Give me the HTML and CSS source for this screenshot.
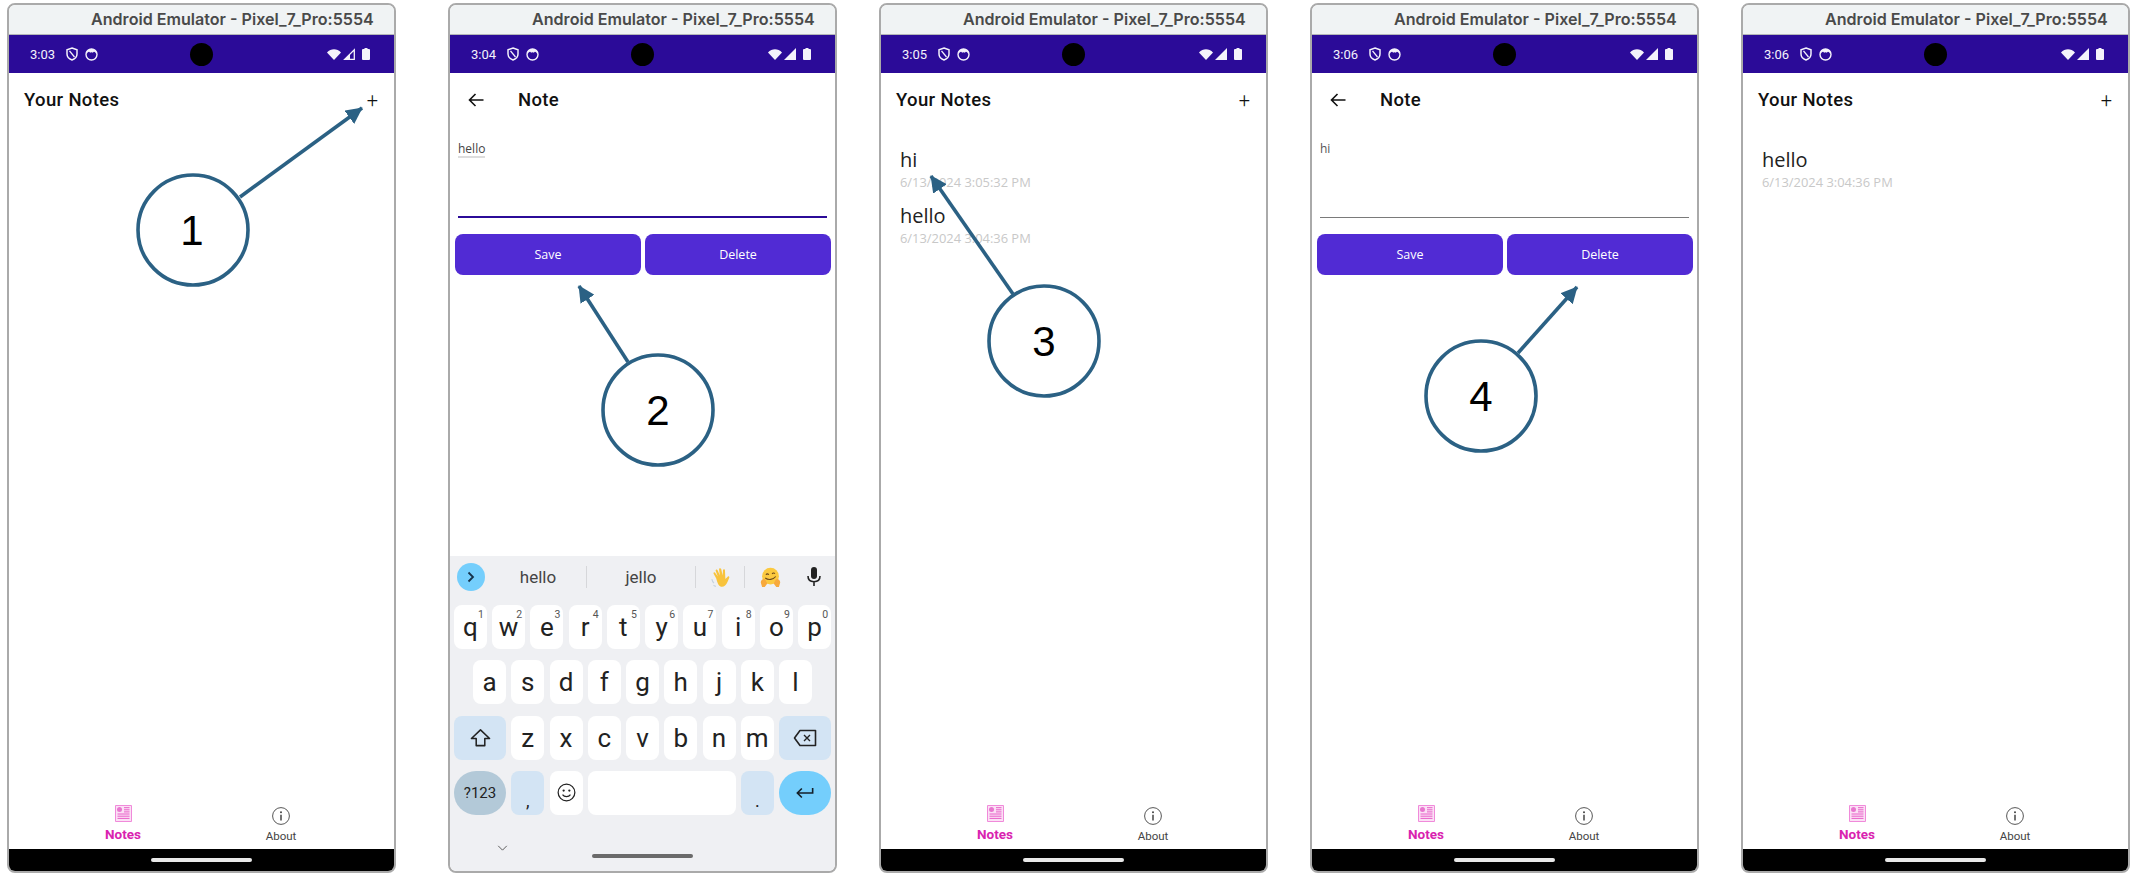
FILE: index.html
```html
<!DOCTYPE html>
<html lang="en">
<head>
    <meta charset="UTF-8">
    <meta name="viewport" content="width=device-width, initial-scale=1.0">
    <title>Your Notes walkthrough</title>
    <link rel="stylesheet" href="styles.css">
</head>
<body>
    <!-- shared icons -->
    <svg class="icon-defs" aria-hidden="true">
      <symbol id="i-shield" viewBox="0 0 12 14"><path d="M6 1 11 2.8V7c0 2.900-2 4.900-5 6-3-1.100-5-3.100-5-6V2.800z" fill="none" stroke="currentColor" stroke-width="1.500"/><path d="M3.500 3.800 8.500 10" stroke="currentColor" stroke-width="1.300"/></symbol>
      <symbol id="i-face" viewBox="0 0 13 13"><circle cx="6.500" cy="6.500" r="5.500" fill="none" stroke="currentColor" stroke-width="1.400"/><path d="M1.500 6.200C3 3.300 4.500 3 5 4.800c.5-.7 2.500-.7 3 0C8.500 3 10 3.300 11.500 6.200V3.500L8.500 1h-4l-3 2.500z" fill="currentColor"/></symbol>
      <symbol id="i-wifi" viewBox="0 0 14 11"><path d="M0 3.500C4-.9 10-.9 14 3.500L7 11z" fill="currentColor"/></symbol>
      <symbol id="i-signal" viewBox="0 0 12 12"><path d="M12 0V12H0z" fill="currentColor"/></symbol>
      <symbol id="i-signal-low" viewBox="0 0 12 12"><path d="M11.300 1.700V11.300H1.700z" fill="none" stroke="currentColor" stroke-width="1.300"/><path d="M7 6V11.300H1.700z" fill="currentColor"/></symbol>
      <symbol id="i-battery" viewBox="0 0 8 12"><path d="M2.500 0h3v1H7a1 1 0 0 1 1 1v9a1 1 0 0 1-1 1H1a1 1 0 0 1-1-1V2a1 1 0 0 1 1-1h1.500z" fill="currentColor"/></symbol>
      <symbol id="i-back" viewBox="0 0 16 14"><path d="M15.500 7H1.500M7.500 1 1.500 7l6 6" fill="none" stroke="currentColor" stroke-width="1.600"/></symbol>
      <symbol id="i-notes" viewBox="0 0 17 17"><path d="M.5.500h16v16H.5z" fill="#fbe0f5" stroke="#f08ada"/><circle cx="4.500" cy="4.500" r="2.500" fill="#e877cf"/><path d="M9 2.700h5.500M9 4.800h5.500M9 6.900h5.500M2.500 9h12M2.500 11.200h12M2.500 13.400h12" stroke="#e85fc8" stroke-width="1"/></symbol>
      <symbol id="i-info" viewBox="0 0 18 18"><circle cx="9" cy="9" r="8.400" fill="none" stroke="currentColor" stroke-width=".9"/><path d="M9 7.700v5.800" stroke="currentColor" stroke-width="1.500"/><circle cx="9" cy="5.300" r="1" fill="currentColor"/></symbol>
    </svg>

    <main class="strip">

      <!-- 1: empty list -->
      <section class="phone phone-first">
        <div class="titlebar">Android Emulator - Pixel_7_Pro:5554</div>
        <div class="statusbar">
          <div class="status-left"><span class="clock">3:03</span><svg class="ic-shield"><use href="#i-shield"/></svg><svg class="ic-face"><use href="#i-face"/></svg></div>
          <div class="camera"></div>
          <div class="status-right"><svg class="ic-wifi"><use href="#i-wifi"/></svg><svg class="ic-signal"><use href="#i-signal-low"/></svg><svg class="ic-battery"><use href="#i-battery"/></svg></div>
        </div>
        <div class="screen">
          <header class="appbar"><h1 class="appbar-title">Your Notes</h1><span class="appbar-add">+</span></header>
          <div class="notes"></div>
          <nav class="tabbar">
            <div class="tab tab-active"><svg class="tab-icon"><use href="#i-notes"/></svg><span>Notes</span></div>
            <div class="tab"><svg class="tab-icon tab-icon-info"><use href="#i-info"/></svg><span>About</span></div>
          </nav>
        </div>
        <div class="navbar"><div class="home-pill"></div></div>
      </section>

      <!-- 2: new note with keyboard -->
      <section class="phone">
        <div class="titlebar">Android Emulator - Pixel_7_Pro:5554</div>
        <div class="statusbar">
          <div class="status-left"><span class="clock">3:04</span><svg class="ic-shield"><use href="#i-shield"/></svg><svg class="ic-face"><use href="#i-face"/></svg></div>
          <div class="camera"></div>
          <div class="status-right"><svg class="ic-wifi"><use href="#i-wifi"/></svg><svg class="ic-signal"><use href="#i-signal"/></svg><svg class="ic-battery"><use href="#i-battery"/></svg></div>
        </div>
        <div class="screen">
          <header class="appbar appbar-detail"><svg class="ic-back"><use href="#i-back"/></svg><h1 class="appbar-title">Note</h1></header>
          <div class="editor editor-focus"><span class="composing">hello</span></div>
          <div class="actions"><button class="btn">Save</button><button class="btn">Delete</button></div>

          <div class="keyboard">
            <div class="suggest">
              <div class="suggest-cell suggest-first"><span class="suggest-toggle"><svg viewBox="0 0 10 12"><path d="M2.500 1.500 7 6l-4.500 4.500" fill="none" stroke="#16324a" stroke-width="1.800"/></svg></span></div>
              <div class="suggest-cell suggest-sep">hello</div>
              <div class="suggest-cell suggest-sep">jello</div>
              <div class="suggest-cell suggest-sep">
                <svg class="emoji emoji-wave" viewBox="0 0 20 20"><path d="M5 11 2.500 6.500c-.6-1.200.9-2 1.600-.9L6.500 9 4.500 3.800c-.5-1.300 1.200-1.900 1.800-.7L8.500 8 7.700 2.300c-.2-1.400 1.700-1.600 2-.3l1.400 6 .3-5c.1-1.300 1.900-1.200 1.900.1l.4 8.400 2.200-2.300c.9-.9 2.100.2 1.400 1.200L15.800 14c-1.600 3.700-3.800 5.300-6.300 4.700C7.300 18.200 6 15 5 11z" fill="#f8c33c"/><path d="M.8 11.500c.3 1.500 1 2.800 2 3.800M2.400 17.400c.8.600 1.500.9 2.300 1" stroke="#c6d3df" stroke-width="1.100" fill="none"/></svg>
              </div>
              <div class="suggest-cell">
                <svg class="emoji" viewBox="0 0 20 20"><circle cx="10" cy="8.700" r="8" fill="#fbc93f"/><path d="M5.700 7.500c.6-1.300 2-1.300 2.600 0M11.500 6.500c.7-1 2-1 2.700-.2" fill="none" stroke="#6d4a1c" stroke-width="1"/><path d="M5 10.500c3 2.200 7.500 1.700 10-1.500" fill="none" stroke="#6d4a1c" stroke-width="1"/><path d="M.8 15c-.5-2.600 3-4.700 4.400-2.700L7 15.700 4.500 19H2z M19.200 15c.5-2.600-3-4.700-4.400-2.700L13 15.700 15.500 19H18z" fill="#f7a93c"/></svg>
              </div>
              <div class="suggest-cell">
                <svg class="ic-mic" viewBox="0 0 14 20"><rect x="4" y="0" width="6" height="12" rx="3" fill="#222"/><path d="M1 9c0 3.800 2.600 5.700 6 5.700s6-1.900 6-5.700M7 14.700V19" fill="none" stroke="#222" stroke-width="1.600"/></svg>
              </div>
            </div>

            <div class="kb-row">
              <div class="key">q<sup>1</sup></div><div class="key">w<sup>2</sup></div><div class="key">e<sup>3</sup></div><div class="key">r<sup>4</sup></div><div class="key">t<sup>5</sup></div><div class="key">y<sup>6</sup></div><div class="key">u<sup>7</sup></div><div class="key">i<sup>8</sup></div><div class="key">o<sup>9</sup></div><div class="key">p<sup>0</sup></div>
            </div>
            <div class="kb-row">
              <div class="key">a</div><div class="key">s</div><div class="key">d</div><div class="key">f</div><div class="key">g</div><div class="key">h</div><div class="key">j</div><div class="key">k</div><div class="key">l</div>
            </div>
            <div class="kb-row">
              <div class="key key-wide key-fn"><svg class="kb-shift" viewBox="0 0 22 20"><path d="M11 1.500 1.500 10.500H6.500V18H15.500V10.500H20.500z" fill="none" stroke="#222" stroke-width="1.600" stroke-linejoin="round"/></svg></div>
              <div class="key">z</div><div class="key">x</div><div class="key">c</div><div class="key">v</div><div class="key">b</div><div class="key">n</div><div class="key">m</div>
              <div class="key key-wide key-fn"><svg class="kb-delete" viewBox="0 0 24 18"><path d="M7 1.500H22.500V16.500H7L1.500 9z" fill="none" stroke="#222" stroke-width="1.600" stroke-linejoin="round"/><path d="M11 6l6 6M17 6l-6 6" stroke="#222" stroke-width="1.400"/></svg></div>
            </div>
            <div class="kb-row">
              <div class="key key-wide key-pill key-sym">?123</div>
              <div class="key key-fn key-punct">,</div>
              <div class="key"><svg class="kb-smile" viewBox="0 0 20 20"><circle cx="10" cy="10" r="8.800" fill="none" stroke="#222" stroke-width="1.300"/><circle cx="7" cy="8" r="1.200" fill="#222"/><circle cx="13" cy="8" r="1.200" fill="#222"/><path d="M5.800 12.200c2 2.700 6.400 2.700 8.400 0" fill="none" stroke="#222" stroke-width="1.300"/></svg></div>
              <div class="key key-space"></div>
              <div class="key key-fn key-punct">.</div>
              <div class="key key-wide key-pill key-enter"><svg class="kb-enter" viewBox="0 0 20 13"><path d="M18.500 1V6.500H2M6.500 1.500 1.500 6.500l5 5" fill="none" stroke="#14202a" stroke-width="1.800"/></svg></div>
            </div>

            <div class="kb-foot">
              <svg class="kb-hide" viewBox="0 0 12 7"><path d="M1 1l5 5 5-5" fill="none" stroke="#555" stroke-width="1.100"/></svg>
              <div class="kb-pill"></div>
            </div>
          </div>
        </div>
      </section>

      <!-- 3: two notes -->
      <section class="phone">
        <div class="titlebar">Android Emulator - Pixel_7_Pro:5554</div>
        <div class="statusbar">
          <div class="status-left"><span class="clock">3:05</span><svg class="ic-shield"><use href="#i-shield"/></svg><svg class="ic-face"><use href="#i-face"/></svg></div>
          <div class="camera"></div>
          <div class="status-right"><svg class="ic-wifi"><use href="#i-wifi"/></svg><svg class="ic-signal"><use href="#i-signal"/></svg><svg class="ic-battery"><use href="#i-battery"/></svg></div>
        </div>
        <div class="screen">
          <header class="appbar"><h1 class="appbar-title">Your Notes</h1><span class="appbar-add">+</span></header>
          <div class="notes">
            <div class="note"><div class="note-text">hi</div><div class="note-date">6/13/2024 3:05:32 PM</div></div>
            <div class="note"><div class="note-text">hello</div><div class="note-date">6/13/2024 3:04:36 PM</div></div>
          </div>
          <nav class="tabbar">
            <div class="tab tab-active"><svg class="tab-icon"><use href="#i-notes"/></svg><span>Notes</span></div>
            <div class="tab"><svg class="tab-icon tab-icon-info"><use href="#i-info"/></svg><span>About</span></div>
          </nav>
        </div>
        <div class="navbar"><div class="home-pill"></div></div>
      </section>

      <!-- 4: opened note -->
      <section class="phone">
        <div class="titlebar">Android Emulator - Pixel_7_Pro:5554</div>
        <div class="statusbar">
          <div class="status-left"><span class="clock">3:06</span><svg class="ic-shield"><use href="#i-shield"/></svg><svg class="ic-face"><use href="#i-face"/></svg></div>
          <div class="camera"></div>
          <div class="status-right"><svg class="ic-wifi"><use href="#i-wifi"/></svg><svg class="ic-signal"><use href="#i-signal"/></svg><svg class="ic-battery"><use href="#i-battery"/></svg></div>
        </div>
        <div class="screen">
          <header class="appbar appbar-detail"><svg class="ic-back"><use href="#i-back"/></svg><h1 class="appbar-title">Note</h1></header>
          <div class="editor"><span>hi</span></div>
          <div class="actions"><button class="btn">Save</button><button class="btn">Delete</button></div>
          <div class="notes"></div>
          <nav class="tabbar">
            <div class="tab tab-active"><svg class="tab-icon"><use href="#i-notes"/></svg><span>Notes</span></div>
            <div class="tab"><svg class="tab-icon tab-icon-info"><use href="#i-info"/></svg><span>About</span></div>
          </nav>
        </div>
        <div class="navbar"><div class="home-pill"></div></div>
      </section>

      <!-- 5: after delete -->
      <section class="phone">
        <div class="titlebar">Android Emulator - Pixel_7_Pro:5554</div>
        <div class="statusbar">
          <div class="status-left"><span class="clock">3:06</span><svg class="ic-shield"><use href="#i-shield"/></svg><svg class="ic-face"><use href="#i-face"/></svg></div>
          <div class="camera"></div>
          <div class="status-right"><svg class="ic-wifi"><use href="#i-wifi"/></svg><svg class="ic-signal"><use href="#i-signal"/></svg><svg class="ic-battery"><use href="#i-battery"/></svg></div>
        </div>
        <div class="screen">
          <header class="appbar"><h1 class="appbar-title">Your Notes</h1><span class="appbar-add">+</span></header>
          <div class="notes">
            <div class="note"><div class="note-text">hello</div><div class="note-date">6/13/2024 3:04:36 PM</div></div>
          </div>
          <nav class="tabbar">
            <div class="tab tab-active"><svg class="tab-icon"><use href="#i-notes"/></svg><span>Notes</span></div>
            <div class="tab"><svg class="tab-icon tab-icon-info"><use href="#i-info"/></svg><span>About</span></div>
          </nav>
        </div>
        <div class="navbar"><div class="home-pill"></div></div>
      </section>
    </main>

    <!-- numbered callouts drawn over the phones -->
    <svg class="callouts" viewBox="0 0 2136 880">
      <defs>
        <marker id="tip" viewBox="0 0 10 10" refX="9.500" refY="5" markerWidth="4.600" markerHeight="4.600" orient="auto"><path d="M0 0 10 5 0 10z" fill="#2b6184"/></marker>
      </defs>
      <g class="callout">
        <line x1="240" y1="197" x2="362" y2="108" marker-end="url(#tip)"/>
        <circle cx="193" cy="230" r="55"/>
        <text x="192" y="245">1</text>
      </g>
      <g class="callout">
        <line x1="628" y1="362" x2="579" y2="286" marker-end="url(#tip)"/>
        <circle cx="658" cy="410" r="55"/>
        <text x="658" y="425">2</text>
      </g>
      <g class="callout">
        <line x1="1013" y1="294" x2="931" y2="176" marker-end="url(#tip)"/>
        <circle cx="1044" cy="341" r="55"/>
        <text x="1044" y="356">3</text>
      </g>
      <g class="callout">
        <line x1="1518" y1="353" x2="1577" y2="287" marker-end="url(#tip)"/>
        <circle cx="1481" cy="396" r="55"/>
        <text x="1481" y="411">4</text>
      </g>
    </svg>
</body>
</html>
```

FILE: styles.css
```css
html, body { margin: 0; height: 880px; overflow: hidden; background: #fff; font-family: Roboto, sans-serif; }
.icon-defs { width: 0; height: 0; position: absolute; }
svg { display: block; flex: none; }

.strip { display: flex; gap: 42px; padding: 3px 0 0 7px; }

.phone { width: 389px; height: 870px; box-sizing: border-box; flex: none; display: flex; flex-direction: column; border: 2px solid #aaa; border-radius: 8px; overflow: hidden; background: #fff; }
.phone-first { margin-right: 10px; }

.titlebar { height: 30px; flex: none; box-sizing: border-box; padding-left: 82px; background: #f0f3f4; border-bottom: 1px solid #b4b6b8; color: #4a4a4a; font: 600 16.1px/28px Inter, sans-serif; white-space: nowrap; }

.statusbar { height: 38px; flex: none; display: grid; grid-template-columns: 1fr 23px 1fr; align-items: center; background: #2b0b98; color: #f4f2fb; }
.status-left { display: flex; align-items: center; padding-left: 21px; }
.clock { font-size: 13px; width: 36px; }
.ic-shield { width: 12px; height: 14px; margin-right: 7px; }
.ic-face { width: 13px; height: 13px; }
.camera { width: 23px; height: 23px; border-radius: 50%; background: #000; }
.status-right { display: flex; align-items: center; justify-content: flex-end; padding-right: 24px; }
.ic-wifi { width: 14px; height: 11px; margin-right: 2px; }
.ic-signal { width: 12px; height: 12px; margin-right: 7px; }
.ic-battery { width: 8px; height: 12px; }

.screen { flex: 1; min-height: 0; display: flex; flex-direction: column; }

.appbar { height: 54px; flex: none; display: flex; align-items: center; justify-content: space-between; padding: 0 16px 0 15px; }
.appbar-title { margin: 0; font-size: 18.5px; font-weight: 500; color: #111; letter-spacing: .35px; }
.appbar-add { font-size: 20px; font-weight: 300; color: #111; }
.appbar-detail { justify-content: flex-start; padding-left: 18px; }
.ic-back { width: 16px; height: 14px; margin-right: 34px; color: #111; }

.notes { flex: 1; padding: 19px 0 0 19px; font-family: "Open Sans", sans-serif; }
.note { margin-bottom: 10px; }
.note-text { font-size: 20px; line-height: 27px; color: #222; }
.note-date { font-size: 12.9px; line-height: 19px; color: #c8c8c8; }

.tabbar { flex: none; display: grid; grid-template-columns: 158px 158px; padding: 0 35px; height: 49px; }
.tab { display: flex; flex-direction: column; align-items: center; color: #444; font-size: 11.5px; }
.tab-active { color: #d923b0; font-size: 13.5px; font-weight: 700; }
.tab-icon { width: 17px; height: 17px; margin: 5px 0 4px; }
.tab-icon-info { width: 18px; height: 18px; margin: 7px 0 4px; }

.navbar { height: 22px; flex: none; display: flex; justify-content: center; padding-top: 9px; box-sizing: border-box; background: #000; }
.home-pill { width: 101px; height: 4px; border-radius: 2px; background: #e8e8e8; }

.editor { height: 91px; flex: none; box-sizing: border-box; margin: 0 8px; padding-top: 12px; border-bottom: 1px solid #7a7a7a; font: 12px/20px "Open Sans", sans-serif; color: #555; }
.editor-focus { border-bottom: 2px solid #2b0b98; }
.composing { display: inline-block; line-height: 14px; border-bottom: 2px solid #ddd; color: #444; }

.actions { display: flex; gap: 4px; margin-top: 16px; padding: 0 4px 0 5px; }
.btn { flex: 1; height: 41px; border: none; border-radius: 8px; background: #512bd4; color: #fff; font: 12.5px "Open Sans", sans-serif; }

.keyboard { margin-top: auto; height: 315px; background: #eff0f3; border-radius: 0 0 6px 6px; }
.suggest { height: 42px; margin-bottom: 7px; display: grid; grid-template-columns: 40px 97px 109px 49px 50px 38px; align-items: center; font-size: 17px; color: #444; }
.suggest-cell { display: flex; align-items: center; justify-content: center; height: 22px; }
.suggest-first { justify-content: flex-start; }
.suggest-sep { border-right: 1px solid #d6d7da; }
.suggest-toggle { width: 28px; height: 28px; margin-left: 7px; flex: none; border-radius: 50%; background: #74cefc; display: flex; align-items: center; justify-content: center; }
.suggest-toggle svg { width: 10px; height: 12px; }
.emoji { width: 21px; height: 21px; }
.emoji-wave { margin-left: 3px; }
.ic-mic { width: 14px; height: 20px; }

.kb-row { display: flex; justify-content: center; gap: 5.25px; margin-bottom: 11.3px; padding: 0 4px; }
.key { position: relative; width: 33px; height: 44px; flex: none; box-sizing: border-box; display: flex; align-items: center; justify-content: center; background: #fff; border-radius: 8px; color: #222; font-size: 26px; }
.key sup { position: absolute; top: 4px; right: 3px; font-size: 10.5px; line-height: 12px; color: #555; }
.key-wide { width: 52px; }
.key-fn { background: #d3e4f4; }
.key-pill { border-radius: 22px; }
.key-sym { background: #b3c9d8; font-size: 15px; }
.key-enter { background: #74cefc; }
.key-space { flex: 1; }
.key-punct { font-size: 18px; align-items: flex-end; padding-bottom: 4px; }
.kb-shift { width: 21px; height: 20px; }
.kb-delete { width: 24px; height: 18px; }
.kb-enter { width: 18px; height: 12px; }
.kb-smile { width: 19px; height: 19px; }

.kb-foot { display: grid; grid-template-columns: 1fr 101px 1fr; margin-top: 30px; }
.kb-hide { width: 11px; height: 6px; margin: 0 0 0 47px; grid-column: 1; }
.kb-pill { grid-column: 2; height: 4px; margin-top: 9px; border-radius: 2px; background: #6a6a6a; }

.callouts { position: absolute; top: 0; left: 0; width: 2136px; height: 880px; pointer-events: none; }
.callout line { stroke: #2b6184; stroke-width: 3.600; }
.callout circle { fill: #fff; stroke: #2b6184; stroke-width: 3.600; }
.callout text { fill: #000; font: 42px "Liberation Sans", sans-serif; text-anchor: middle; }
```
